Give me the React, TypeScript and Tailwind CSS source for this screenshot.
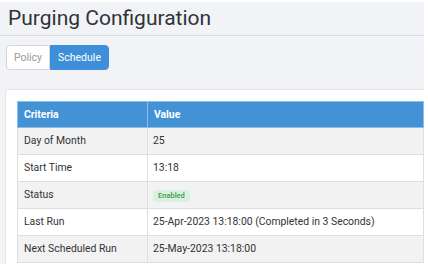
const rows = [
  { label: "Day of Month", value: "25" },
  { label: "Start Time", value: "13:18" },
  { label: "Status", value: "badge" },
  { label: "Last Run", value: "25-Apr-2023 13:18:00 (Completed in 3 Seconds)" },
  { label: "Next Scheduled Run", value: "25-May-2023 13:18:00" },
];

const App = () => {
  return (
    <div
      className="w-[428px] h-[269px] bg-white overflow-hidden"
      style={{ fontFamily: "Roboto, 'Liberation Sans', sans-serif" }}
    >
      <div className="mt-[2px] w-[424px] h-[262px] bg-[#f2f3f7] overflow-hidden">
        <div className="h-[34px] border-b border-[#dcdde2] pl-[8px] pt-[1px]">
          <h1 className="text-[21px] leading-[30px] text-[#2f3338]">
            Purging Configuration
          </h1>
        </div>
        <div className="flex pl-[6px] pt-[9px]">
          <button className="h-[25px] w-[44px] text-[10.5px] text-[#9a9a9a] bg-white border border-[#d6d6d6] rounded-l-[4px]">
            Policy
          </button>
          <button className="h-[25px] w-[59px] text-[10.5px] text-white bg-[#3e8fd9] border border-[#3e8fd9] rounded-r-[4px]">
            Schedule
          </button>
        </div>
        <div className="ml-[5px] mt-[19px] w-[440px] h-[200px] bg-white border border-[#e4e5e9] rounded-[3px] pl-[11px] pt-[11px]">
          <table className="w-[407px] border-collapse text-[10.4px] text-[#333]">
            <thead>
              <tr className="bg-[#4392d6] text-white h-[26px]">
                <th className="w-[130px] text-left font-bold pl-[6px] border border-[#8fbde6]">
                  Criteria
                </th>
                <th className="text-left font-bold pl-[6px] border border-[#8fbde6]">
                  Value
                </th>
              </tr>
            </thead>
            <tbody>
              {rows.map((r, i) => (
                <tr
                  key={r.label}
                  className={i % 2 === 0 ? "bg-[#f2f2f2] h-[27px]" : "bg-white h-[27px]"}
                >
                  <td className="pl-[6px] border border-[#dedede]">{r.label}</td>
                  <td className="pl-[5px] border border-[#dedede]">
                    {r.value === "badge" ? (
                      <span className="inline-block px-[5px] py-[1.5px] rounded-[3px] bg-[#dcf0df] text-[#3a9d4c] text-[7.5px] font-medium leading-[9px]">
                        Enabled
                      </span>
                    ) : (
                      r.value
                    )}
                  </td>
                </tr>
              ))}
            </tbody>
          </table>
        </div>
      </div>
    </div>
  );
};

export default App;
